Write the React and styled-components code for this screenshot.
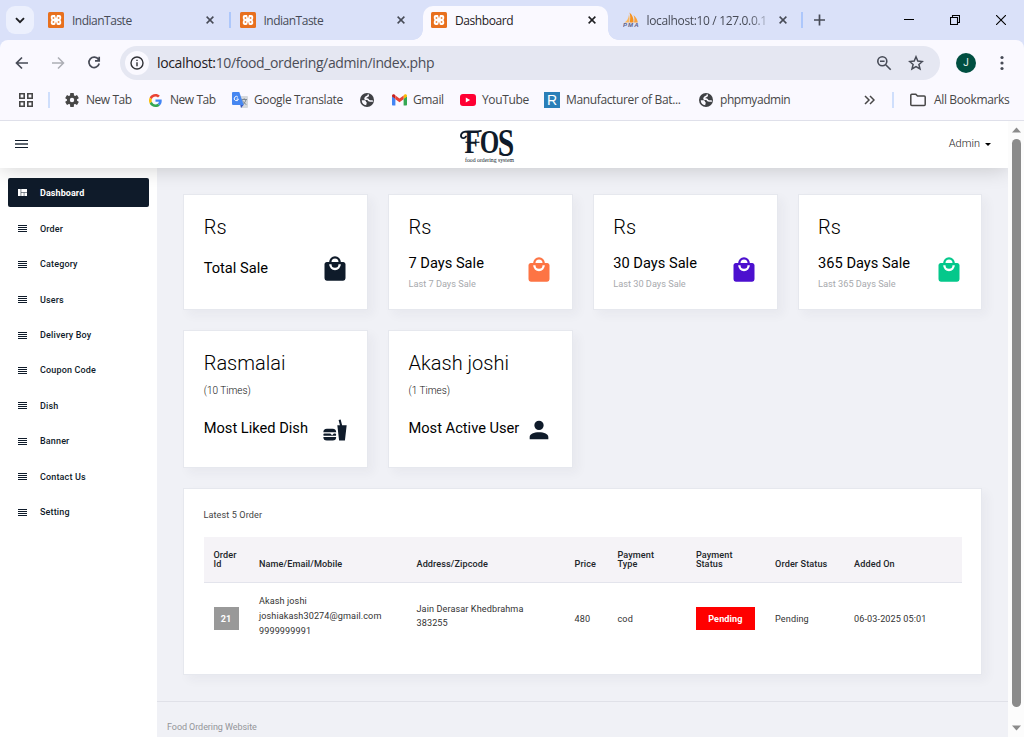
import React from "react";
import styled, { createGlobalStyle } from "styled-components";

const Global = createGlobalStyle`
  * { box-sizing: border-box; }
  body { margin: 0; overflow: hidden; background: #f0f1f6; font-family: Roboto, "Liberation Sans", sans-serif; }
`;

const UI = `"Open Sans", "Noto Sans", sans-serif`;

const Window = styled.div`
  width: 1024px; height: 737px; overflow: hidden;
  display: flex; flex-direction: column;
`;

/* ---------- tab strip ---------- */
const TabStrip = styled.div`
  display: flex; height: 40px; flex: none; background: #dae1f9;
`;
const TabSearch = styled.div`
  width: 28px; height: 28px; margin: 6px 6px 0; border-radius: 9px; background: #ecf0fd;
  display: flex; align-items: center; justify-content: center; flex: none;
`;
const Tab = styled.div`
  width: 185px; height: 34px; margin: 6px 6.5px 0 0; padding: 0 11px 6px 8px; flex: none;
  display: flex; align-items: center; gap: 8px; position: relative;
  border-radius: 10px 10px 0 0;
  background: ${p => (p.$active ? "#faf9ff" : "transparent")};
  color: ${p => (p.$active ? "#1f2023" : "#474b57")};
  &::before, &::after {
    content: ""; display: ${p => (p.$active ? "block" : "none")};
    position: absolute; bottom: 0; width: 10px; height: 10px;
  }
  &::before { left: -10px; background: radial-gradient(circle at 0 0, transparent 9.5px, #faf9ff 10px); }
  &::after { right: -10px; background: radial-gradient(circle at 100% 0, transparent 9.5px, #faf9ff 10px); }
`;
const TabTitle = styled.span`
  flex: 1; min-width: 0; overflow: hidden; white-space: nowrap; padding-top: 2px;
  font: 12px/20px ${UI}; letter-spacing: ${p => p.$ls ?? -0.5}px;
  ${p => p.$fade && "mask-image: linear-gradient(90deg, #000 82%, transparent 102%);"}
`;
const TabClose = styled.svg`
  width: 8px; height: 8px; flex: none; stroke: currentColor; stroke-width: 1.7; fill: none; margin-right: ${p => p.$mr ?? 1}px;
`;
const Separator = styled.i`
  width: 2px; height: 16px; flex: none; background: ${p => p.$c || "#adc7fb"};
  margin: ${p => p.$m};
`;
const Controls = styled.div`
  display: flex; align-items: center; justify-content: space-between;
  margin-left: auto; width: 102px; margin-right: 18px; height: 40px;
`;

/* ---------- toolbar ---------- */
const ToolbarBack = styled.div`background: #dae1f9; flex: none;`;
const Toolbar = styled.div`
  display: flex; height: 46px; align-items: center; padding: 0 15px 0 14px;
  background: #faf9ff; border-radius: 8px 8px 0 0;
`;
const NavIcons = styled.div`
  display: flex; gap: 20px; width: 106px; align-items: center; color: #474b57;
`;
const Omnibox = styled.div`
  width: 820px; height: 34px; border-radius: 17px; background: #e5e7f2;
  display: flex; align-items: center; padding: 0 16px 0 5px; color: #474b57;
`;
const SiteInfo = styled.div`
  width: 24px; height: 24px; border-radius: 12px; background: #faf9ff; margin-right: 8px;
  display: flex; align-items: center; justify-content: center; color: #303136;
`;
const Url = styled.div`
  flex: 1; font: 14px/20px ${UI}; letter-spacing: -0.37px; color: #4b4d57;
  b { font-weight: 400; color: #1f2023; }
`;
const OmniIcons = styled.div`display: flex; gap: 16px;`;
const Avatar = styled.div`
  width: 20px; height: 20px; border-radius: 50%; background: #004f41; color: #e7f5ef;
  margin: 0 24px 0 16px; font: 10px/20px Roboto, sans-serif; text-align: center;
`;
const Bookmarks = styled.div`
  display: flex; height: 35px; padding: 0 14px 6px 18px; align-items: center; flex: none;
  background: #faf9ff; border-bottom: 1px solid #dfe0ea; color: #474747;
`;
const Bookmark = styled.div`
  display: flex; align-items: center; flex: none; gap: ${p => p.$gap ?? 6}px;
  width: ${p => p.$w}px; font: 12px/20px ${UI}; letter-spacing: ${p => p.$ls ?? -0.36}px; white-space: nowrap;
  svg { flex: none; }
`;

/* ---------- page ---------- */
const Viewport = styled.div`display: flex; flex: 1; min-height: 0;`;
const Page = styled.div`width: 1008px; display: flex; flex-direction: column;`;
const Header = styled.header`
  height: 47px; flex: none; background: #fff; display: flex; align-items: center; justify-content: space-between;
  padding: 0 17px 0 15px; position: relative; z-index: 1;
  box-shadow: 0 0 22px rgba(0, 0, 0, 0.2);
  clip-path: inset(0 0 -40px 0);
`;
const AdminMenu = styled.div`
  display: flex; align-items: center; font-size: 11px; font-weight: 300; color: #222; gap: 5px; line-height: 16px;
  width: 110px; justify-content: flex-end; padding-bottom: 2px;
  &::after { content: ""; border: 3px solid transparent; border-top-color: #000; border-bottom: 0; margin-top: 2px; }
`;
const HeaderLeft = styled.div`width: 80px; display: flex; padding-bottom: 2px;`;
const Body = styled.div`display: flex; flex: 1; min-height: 0;`;
const Sidebar = styled.nav`
  width: 157px; flex: none; background: #fff; padding: 10px 8px; display: flex; flex-direction: column; gap: 6.45px;
`;
const NavItem = styled.a`
  height: 29px; flex: none; border-radius: 2px; display: flex; align-items: center; gap: 13px; padding-left: 10px;
  margin-bottom: ${p => (p.$active ? 0.75 : 0)}px;
  font-size: 9px; font-weight: ${p => (p.$active ? 700 : 500)}; letter-spacing: ${p => (p.$active ? 0.08 : 0.15)}px;
  background: ${p => (p.$active ? "#0f1b2a" : "transparent")};
  color: ${p => (p.$active ? "#fff" : "#0f1b2a")};
`;
const Main = styled.main`
  flex: 1; background: #f0f1f6; padding-top: 26px; display: flex; flex-direction: column;
`;
const Cards = styled.section`
  display: grid; width: 799px; grid-template-columns: repeat(4, 1fr); column-gap: 20.2px; row-gap: 20px;
  grid-template-rows: 116px 138px; margin-left: 26.4px;
`;
const Card = styled.article`
  min-width: 0; background: #fff; border: 1px solid #e6e8ee; padding: 20px 18.4px 0 19.3px;
  box-shadow: 5px 5px 10px rgba(40, 45, 70, 0.045); display: flex; flex-direction: column;
`;
const Figure = styled.div`font-size: 20px; line-height: 25px; font-weight: 300; color: #000;`;
const Count = styled.div`font-size: 10px; line-height: 14px; color: #111; margin-top: 8px; font-weight: 300;`;
const CardRow = styled.div`
  display: flex; justify-content: space-between; align-items: flex-start;
  margin-top: ${p => p.$mt}px;
`;
const CardTitle = styled.div`font-size: 14.65px; line-height: 20px; color: #000; white-space: nowrap;`;
const CardNote = styled.div`font-size: 9.2px; line-height: 13px; color: #a7a9ad; margin-top: 4px;`;
const CardIcon = styled.svg`width: 28px; height: 28px; flex: none; fill: ${p => p.$c}; margin-top: ${p => p.$mt || 0}px;`;

const Panel = styled.section`
  width: 799px; height: 187px; flex: none; margin: 20px 0 0 26px; padding: 20px; background: #fff; border: 1px solid #e6e8ee;
  box-shadow: 5px 5px 10px rgba(40, 45, 70, 0.045);
`;
const PanelTitle = styled.h2`margin: 0 0 0 -0.5px; font-size: 9.1px; line-height: 13px; font-weight: 400; color: #444; letter-spacing: 0.1px;`;
const Row = styled.div`
  display: grid; grid-template-columns: 45.5px 157.5px 158px 43px 78.4px 79.2px 79px 117.4px; width: 758px;
  font-size: 9.1px; color: #333; letter-spacing: 0.1px;
`;
const HeadRow = styled(Row)`
  margin-top: 15px; height: 46px; align-items: end; padding-bottom: 13px; background: #f5f3f7; border-bottom: 1px solid #e3e4ec;
  font-weight: 500; line-height: 9px; color: #212529;
`;
const DataRow = styled(Row)`height: 72px; align-items: center;`;
const Cell = styled.div`padding: 0 0 ${p => p.$pb || 0}px 9.5px; line-height: ${p => p.$lh || 14.5}px;`;
const Badge = styled.span`
  display: block; height: 23px; width: ${p => p.$w}px; line-height: 24px; text-align: center;
  background: ${p => p.$c}; color: #fff; font-weight: 700;
`;
const Footer = styled.footer`
  margin-top: 26px; border-top: 1px solid #e0e1e8; padding: 19px 10px; font-size: 9px; line-height: 13px; color: #939599; letter-spacing: -0.07px;
`;
const Scrollbar = styled.div`
  width: 16px; background: #fcfcfc; display: flex; flex-direction: column; align-items: center; padding: 6px 0 6px 1px;
`;
const Thumb = styled.div`width: 9px; flex: 1; margin: 6px 0 18px; border-radius: 5px; background: #8b8b8b;`;

/* ---------- drawings ---------- */
const Line = ({ w = 16, h = 16, vb, sw = 1.6, c = "currentColor", children }) => (
  <svg width={w} height={h} viewBox={vb || `0 0 ${w} ${h}`} fill="none" stroke={c} strokeWidth={sw}>{children}</svg>
);
const Xampp = () => (
  <svg width="16" height="16" viewBox="0 0 16 16">
    <rect width="16" height="16" rx="1.5" fill="#e8701e" />
    <path d="M4.800 3h1.200c1.100 0 2 .7 2 1.700C8 3.700 8.900 3 10 3h1.200c1.300 0 2 .8 2 1.900v1.200c0 .9-.3 1.500-.9 1.900.6.400.9 1 .9 1.900v1.200c0 1.100-.7 1.900-2 1.900H10c-1.100 0-2-.7-2-1.700 0 1-.9 1.700-2 1.700H4.800c-1.300 0-2-.8-2-1.900V9.900c0-.9.300-1.500.9-1.900-.6-.4-.9-1-.9-1.900V4.900C2.800 3.800 3.500 3 4.800 3z" fill="#fff" />
    <path d="M4.700 5.200h1.500v1.500H4.700zM9.800 5.200h1.500v1.500H9.800zM4.700 9.300h1.500v1.500H4.700zM9.800 9.300h1.500v1.500H9.800zM7.500 3h1v2.600h-1zM7.500 10.400h1V13h-1z" fill="#e8701e" />
  </svg>
);
const Pma = () => (
  <svg width="16" height="16" viewBox="0 0 16 16">
    <path d="M1.5 10.5C4 9 5.500 6.500 6 2.500c.8 3 .8 6-.2 8z" fill="#fbb65b" />
    <path d="M6.500 10.500C7.500 7 7.500 4 6.500.5c3 2.500 4.300 6 4 10z" fill="#f6921e" />
    <path d="M11 10.500c.7-2.500.5-5-.5-7.500 2.500 2 4 4.800 4.300 7.500z" fill="#f9a13a" />
    <text x="0" y="15" fontSize="6" fontWeight="700" fontStyle="italic" fontFamily="Liberation Sans" fill="#5d6087" textLength="15.500">PMA</text>
  </svg>
);
const Gear = () => (
  <svg width="14" height="14" viewBox="0 0 14 14">
    <g fill="#474747">
      {[0, 60, 120].map(a => <rect key={a} x="5.100" y="0.100" width="3.800" height="13.800" rx=".6" transform={`rotate(${a} 7 7)`} />)}
      <circle cx="7" cy="7" r="5.100" />
    </g>
    <circle cx="7" cy="7" r="2.200" fill="#faf9ff" />
  </svg>
);
const Google = () => (
  <svg width="13" height="13" viewBox="0 0 48 48">
    <path fill="#EA4335" d="M24 9.500c3.540 0 6.710 1.220 9.210 3.600l6.850-6.850C35.900 2.380 30.470 0 24 0 14.620 0 6.510 5.380 2.560 13.220l7.980 6.190C12.430 13.720 17.740 9.500 24 9.500z" />
    <path fill="#4285F4" d="M46.980 24.550c0-1.570-.15-3.090-.38-4.550H24v9.020h12.940c-.58 2.960-2.260 5.480-4.780 7.180l7.730 6c4.510-4.180 7.090-10.360 7.090-17.650z" />
    <path fill="#FBBC05" d="M10.530 28.590c-.48-1.450-.76-2.990-.76-4.590s.27-3.140.76-4.590l-7.980-6.190C.92 16.460 0 20.120 0 24s.92 7.540 2.560 10.780l7.970-6.190z" />
    <path fill="#34A853" d="M24 48c6.480 0 11.930-2.130 15.890-5.810l-7.730-6c-2.150 1.450-4.920 2.300-8.160 2.300-6.260 0-11.570-4.220-13.470-9.910l-7.980 6.190C6.510 42.620 14.620 48 24 48z" />
  </svg>
);
const Translate = () => (
  <svg width="16" height="16" viewBox="0 0 16 16">
    <path d="M6 4h9a1 1 0 0 1 1 1v10a1 1 0 0 1-1 1H9z" fill="#d5d8dc" />
    <path d="M9.500 7.500h5.500M12.200 6.300v1.200M14 7.500c-.5 2.500-1.800 4-3.800 5M10.500 8.500c.8 1.800 2 3 3.900 4" fill="none" stroke="#758089" strokeWidth=".9" />
    <path d="M9 16l-.8-3.500H12z" fill="#3a5bc0" />
    <path d="M1 0h6.300l4.400 13H1a1 1 0 0 1-1-1V1a1 1 0 0 1 1-1z" fill="#4687f1" />
    <path d="M6 5.300A2.100 2.100 0 1 0 6.400 7H4.500" fill="none" stroke="#fff" strokeWidth="1" />
  </svg>
);
const Globe = () => (
  <svg width="14" height="14" viewBox="0 0 14 14">
    <circle cx="7" cy="7" r="7" fill="#3f4145" />
    <path d="M8.200 2.200C8.200 3.200 7.700 3.500 6.700 3.600c-.9.100-1 .9-1.300 1.300-.4.500-.5 1.300.3 1.300h1.500c1.200 0 1.300 1 1.600 1.400.3.400.8.400 1.400.4h2" fill="none" stroke="#faf9ff" strokeWidth="1.700" strokeLinecap="round" />
    <path d="M1.700 7.200h2.600c1.200 0 1.700.7 1.700 1.400 0 .8.900.6.900 1.300 0 .6-.6.600-.6 1.200v1.100A5.300 5.300 0 0 1 1.700 7.200z" fill="#faf9ff" />
  </svg>
);
const Gmail = () => (
  <svg width="15" height="12" viewBox="0 0 15 12">
    <path d="M0 2v8.500c0 .6.400 1 1 1h2.400V4.800z" fill="#4285f4" />
    <path d="M15 2v8.500c0 .6-.4 1-1 1h-2.400V4.800z" fill="#34a853" />
    <path d="M11.600 1.400V5L15 2.500V1.800c0-1.400-1.500-2-2.500-1.200z" fill="#fbbc04" />
    <path d="M0 1.800v.7L3.400 5V1.400L2.500.6C1.500-.2 0 .4 0 1.800z" fill="#c5221f" />
    <path d="M3.400 1.400V5.200l4.100 3.100 4.100-3.100V1.400L7.500 4.500z" fill="#ea4335" />
  </svg>
);
const Youtube = () => (
  <svg width="16" height="12" viewBox="0 0 16 12"><rect width="16" height="12" rx="3" fill="#ff0033" /><path d="M5.800 3.500v5l4.300-2.500z" fill="#fff" /></svg>
);
const RMark = styled.span`
  width: 16px; height: 16px; background: #2a7fb8; color: #fff; font: 14px/16px "Liberation Sans", sans-serif; text-align: center; letter-spacing: 0;
`;
const Hamburger = () => (
  <svg width="13" height="8" viewBox="0 0 13 8" shapeRendering="crispEdges"><path d="M0 0h13v1H0zM0 7h13v1H0z" fill="#0f1b2a" /><path d="M0 3h13v2H0z" fill="#5e666f" /></svg>
);
const ListIcon = () => (
  <svg width="9" height="7" viewBox="0 0 9 7" shapeRendering="crispEdges"><path d="M0 0h9v1H0zM0 2h9v1H0zM0 4h9v1H0zM0 6h9v1H0z" fill="#0f1b2a" /></svg>
);
const QuiltIcon = () => (
  <svg width="9" height="7" viewBox="0 0 9 7"><path d="M0 0h2.700v7H0zM3.200 0H9v3.200H3.200zM3.200 3.700h2.600V7H3.200zM6.300 3.700H9V7H6.300z" fill="#fff" /></svg>
);
const LogoSvg = styled.svg`display: block; overflow: visible;`;
const Logo = () => (
  <LogoSvg width="58" height="36" viewBox="0 0 58 36">
    <g fill="#0f1b2a" fontFamily="Liberation Serif, serif">
      <text transform="translate(5.500 25.500) scale(.76 1)" fontSize="33" fontWeight="700">FO<tspan fontSize="39" dy="3.500" dx="-2">S</tspan></text>
      <text x="6" y="34.500" fontSize="5.600" textLength="49" lengthAdjust="spacingAndGlyphs">food ordering system</text>
    </g>
    <path d="M7 9.500C5 12.500 1.500 11 2 8 2.600 4.600 6.500 4.200 10 4.300c5 .2 8 .5 12-.4" fill="none" stroke="#0f1b2a" strokeWidth="1.800" strokeLinecap="round" />
    <path d="M6.500 15.300h14" stroke="#0f1b2a" strokeWidth="1.200" />
  </LogoSvg>
);

const BAG = "M12,13A5,5 0 0,1 7,8H9A3,3 0 0,0 12,11A3,3 0 0,0 15,8H17A5,5 0 0,1 12,13M12,3A3,3 0 0,1 15,6H9A3,3 0 0,1 12,3M19,6H17A5,5 0 0,0 12,1A5,5 0 0,0 7,6H5C3.890,6 3,6.890 3,8V20A2,2 0 0,0 5,22H19A2,2 0 0,0 21,20V8C21,6.890 20.100,6 19,6Z";
const FOOD = "M15.500,21L14,8H16.230L15.100,3.460L16.840,3L18.090,8H22L20.500,21H15.500M5,11H10A3,3 0 0,1 13,14H2A3,3 0 0,1 5,11M13,18A3,3 0 0,1 10,21H5A3,3 0 0,1 2,18H13M3,15H8L9.500,16.500L11,15H12A1,1 0 0,1 13,16A1,1 0 0,1 12,17H3A1,1 0 0,1 2,16A1,1 0 0,1 3,15Z";
const USER = "M12,4A4,4 0 0,1 16,8A4,4 0 0,1 12,12A4,4 0 0,1 8,8A4,4 0 0,1 12,4M12,14C16.420,14 20,15.790 20,18V20H4V18C4,15.790 7.580,14 12,14Z";

const Icon = ({ d, c = "#0f1b2a", mt }) => <CardIcon viewBox="0 0 24 24" $c={c} $mt={mt}><path d={d} /></CardIcon>;
const Close = ({ mr }) => <TabClose viewBox="0 0 9 9" $mr={mr}><path d="M.7.7l7.600 7.600M8.300.7L.7 8.300" /></TabClose>;

const sales = [
  ["7 Days Sale", "Last 7 Days Sale", "#fd7444"],
  ["30 Days Sale", "Last 30 Days Sale", "#4c10cf"],
  ["365 Days Sale", "Last 365 Days Sale", "#04c88b"],
];
const links = ["Order", "Category", "Users", "Delivery Boy", "Coupon Code", "Dish", "Banner", "Contact Us", "Setting"];

export default function App() {
  return (
    <Window>
      <Global />
      <TabStrip>
        <TabSearch><Line w={10} h={7} sw={1.9} c="#1f2023"><path d="M1 1.200l4 4 4-4" /></Line></TabSearch>
        <Tab><Xampp /><TabTitle>IndianTaste</TabTitle><Close mr={0} /></Tab>
        <Separator $m="12px 1px 0 -3px" />
        <Tab><Xampp /><TabTitle>IndianTaste</TabTitle><Close /></Tab>
        <Tab $active><Xampp /><TabTitle $ls={-0.42}>Dashboard</TabTitle><Close /></Tab>
        <Tab><Pma /><TabTitle $ls={-0.34} $fade>localhost:10 / 127.0.0.1</TabTitle><Close mr={2} /></Tab>
        <Separator $m="12px 11px 0 -5px" />
        <Line w={11} h={40} sw={1.700} c="#474b57"><path d="M5.500 14.500v11M0 20h11" /></Line>
        <Controls>
          <Line w={10} h={10} sw={1} c="#000"><path d="M0 4.500h10" /></Line>
          <Line w={10} h={10} sw={1.100} c="#000"><path d="M.5 2.500h7v7h-7zM2.500 2.500V.5h7v7h-2" /></Line>
          <Line w={10} h={10} sw={1.100} c="#000"><path d="M0 0l10 10M10 0L0 10" /></Line>
        </Controls>
      </TabStrip>

      <ToolbarBack>
        <Toolbar>
          <NavIcons>
            <Line w={16} h={16} sw={1.700}><path d="M14 8H3M8 2.500L2.500 8 8 13.500" /></Line>
            <Line w={16} h={16} sw={1.500} c="#acaeb5"><path d="M2 8h11M8 2.500L13.500 8 8 13.500" /></Line>
            <Line w={16} h={16} sw={1.700}><path d="M12.500 4.500A5.200 5.200 0 1 0 13.200 8.500M13.200 1.800v4.100H9" /></Line>
          </NavIcons>
          <Omnibox>
            <SiteInfo><Line w={14} h={14} sw={1.400}><circle cx="7" cy="7" r="6" /><path d="M7 6.200v4M7 3.700v1.400" /></Line></SiteInfo>
            <Url><b>localhost:</b>10/food_ordering/admin/index.php</Url>
            <OmniIcons>
              <Line w={16} h={16} sw={1.600}><circle cx="6.300" cy="6.300" r="4.500" /><path d="M9.700 9.700l5 5M4 6.300h4.600" /></Line>
              <Line w={16} h={16} sw={1.500}><path d="M8 1.800l1.800 4.300 4.600.4-3.500 3 1.100 4.500L8 11.600 4 14l1.100-4.500-3.500-3 4.600-.4z" /></Line>
            </OmniIcons>
          </Omnibox>
          <Avatar>J</Avatar>
          <svg width="4" height="16" viewBox="0 0 4 16" fill="#474b57"><circle cx="2" cy="2.500" r="1.600" /><circle cx="2" cy="8" r="1.600" /><circle cx="2" cy="13.500" r="1.600" /></svg>
        </Toolbar>
      </ToolbarBack>

      <Bookmarks>
        <Line w={16} h={16} sw={1.600}><path d="M1.800 1.800h4.400v4.400H1.800zM9.800 1.800h4.400v4.400H9.800zM1.800 9.800h4.400v4.400H1.800zM9.800 9.800h4.400v4.400H9.800z" /></Line>
        <Separator $c="#cfdffc" $m="0 15px 0 14px" />
        <Bookmark $w={84} $gap={7} $ls={-0.45}><Gear />New Tab</Bookmark>
        <Bookmark $w={83} $gap={8} $ls={-0.45}><Google />New Tab</Bookmark>
        <Bookmark $w={128}><Translate />Google Translate</Bookmark>
        <Bookmark $w={32}><Globe /></Bookmark>
        <Bookmark $w={68}><Gmail />Gmail</Bookmark>
        <Bookmark $w={84}><Youtube />YouTube</Bookmark>
        <Bookmark $w={155}><RMark>R</RMark>Manufacturer of Bat...</Bookmark>
        <Bookmark $w={165} $gap={7} $ls={-0.45}><Globe />phpmyadmin</Bookmark>
        <Line w={11} h={10} sw={1.500}><path d="M1 1l4 4-4 4M6 1l4 4-4 4" /></Line>
        <Separator $c="#cfdffc" $m="0 16px 0 17px" />
        <Bookmark $w={100} $gap={8}>
          <Line w={16} h={14} sw={1.500}><path d="M.8 2.200q0-1 1-1h4l1.700 1.900h6.700q1 0 1 1v7.300q0 1-1 1H1.800q-1 0-1-1z" /></Line>
          All Bookmarks
        </Bookmark>
      </Bookmarks>

      <Viewport>
        <Page>
          <Header>
            <HeaderLeft><Hamburger /></HeaderLeft>
            <Logo />
            <AdminMenu>Admin</AdminMenu>
          </Header>
          <Body>
            <Sidebar>
              <NavItem $active><QuiltIcon />Dashboard</NavItem>
              {links.map(l => <NavItem key={l}><ListIcon />{l}</NavItem>)}
            </Sidebar>
            <Main>
              <Cards>
                <Card>
                  <Figure>Rs</Figure>
                  <CardRow $mt={18}><CardTitle>Total Sale</CardTitle><Icon d={BAG} mt={-3} /></CardRow>
                </Card>
                {sales.map(([t, n, c]) => (
                  <Card key={t}>
                    <Figure>Rs</Figure>
                    <CardRow $mt={13}>
                      <div><CardTitle>{t}</CardTitle><CardNote>{n}</CardNote></div>
                      <Icon d={BAG} c={c} mt={3} />
                    </CardRow>
                  </Card>
                ))}
                <Card>
                  <Figure>Rasmalai</Figure><Count>(10 Times)</Count>
                  <CardRow $mt={20}><CardTitle>Most Liked Dish</CardTitle><Icon d={FOOD} mt={-2} /></CardRow>
                </Card>
                <Card>
                  <Figure>Akash joshi</Figure><Count>(1 Times)</Count>
                  <CardRow $mt={20}><CardTitle>Most Active User</CardTitle><Icon d={USER} mt={-2} /></CardRow>
                </Card>
              </Cards>
              <Panel>
                <PanelTitle>Latest 5 Order</PanelTitle>
                <HeadRow>
                  <Cell $lh={9}>Order<br />Id</Cell><Cell $lh={9}>Name/Email/Mobile</Cell><Cell $lh={9}>Address/Zipcode</Cell>
                  <Cell $lh={9}>Price</Cell><Cell $lh={9}>Payment<br />Type</Cell><Cell $lh={9}>Payment<br />Status</Cell>
                  <Cell $lh={9}>Order Status</Cell><Cell $lh={9}>Added On</Cell>
                </HeadRow>
                <DataRow>
                  <Cell $pb={1}><Badge $c="#999" $w={25}>21</Badge></Cell>
                  <Cell $lh={15} $pb={6}>Akash joshi<br />joshiakash30274@gmail.com<br />9999999991</Cell>
                  <Cell $lh={14} $pb={6}>Jain Derasar Khedbrahma<br />383255</Cell>
                  <Cell>480</Cell><Cell>cod</Cell>
                  <Cell $pb={1}><Badge $c="#f00" $w={59}>Pending</Badge></Cell>
                  <Cell>Pending</Cell><Cell>06-03-2025 05:01</Cell>
                </DataRow>
              </Panel>
              <Footer>Food Ordering Website</Footer>
            </Main>
          </Body>
        </Page>
        <Scrollbar>
          <svg width="9" height="6" viewBox="0 0 9 6"><path d="M0 5.500L4.500.5 9 5.500z" fill="#8b8b8b" /></svg>
          <Thumb />
          <svg width="9" height="6" viewBox="0 0 9 6"><path d="M0 .5h9L4.500 5.500z" fill="#8b8b8b" /></svg>
        </Scrollbar>
      </Viewport>
    </Window>
  );
}
